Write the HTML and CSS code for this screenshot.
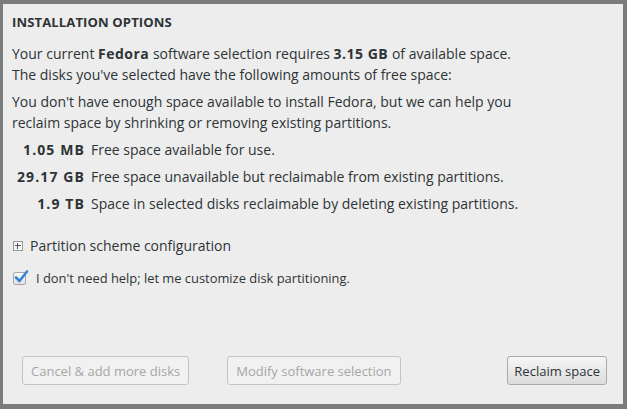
FILE: index.html
```html
<!DOCTYPE html>
<html>
<head>
<meta charset="utf-8">
<link rel="stylesheet" href="styles.css">
</head>
<body>
<div class="dialog">
  <h1 class="title">INSTALLATION OPTIONS</h1>
  <p class="para">Your current <b>Fedora</b> software selection requires <b>3.15 GB</b> of available space.<br>The disks you've selected have the following amounts of free space:</p>
  <p class="para">You don't have enough space available to install Fedora, but we can help you<br>reclaim space by shrinking or removing existing partitions.</p>
  <div class="amounts">
    <span class="amt">1.05 MB</span><span class="desc">Free space available for use.</span>
    <span class="amt">29.17 GB</span><span class="desc">Free space unavailable but reclaimable from existing partitions.</span>
    <span class="amt">1.9 TB</span><span class="desc">Space in selected disks reclaimable by deleting existing partitions.</span>
  </div>
  <div class="expander"><span class="plus"></span><span>Partition scheme configuration</span></div>
  <div class="check"><span class="box"><svg width="16" height="16" viewBox="0 0 16 16"><path d="M3 8.5 L6.5 12 L14 2.5" fill="none" stroke="#3b82d4" stroke-width="2.6" stroke-linecap="round" stroke-linejoin="round"/></svg></span><span>I don't need help; let me customize disk partitioning.</span></div>
  <div class="spacer"></div>
  <div class="buttons">
    <button class="btn disabled">Cancel &amp; add more disks</button>
    <button class="btn disabled second">Modify software selection</button>
    <button class="btn primary">Reclaim space</button>
  </div>
</div>
</body>
</html>
```
FILE: styles.css
```css
html, body {
  margin: 0;
  padding: 0;
  background: #7b7b7b;
  width: 627px;
  height: 409px;
  overflow: hidden;
}
body {
  padding: 4px 4px 5px 3px;
  box-sizing: border-box;
  font-family: "Open Sans", "DejaVu Sans", sans-serif;
  color: #2e3436;
}
.dialog {
  background: #ededed;
  height: 400px;
  box-sizing: border-box;
  padding: 9px 0 0 9px;
  display: flex;
  flex-direction: column;
  font-size: 14px;
}
.title {
  margin: 0;
  font-size: 13.1px;
  font-weight: bold;
  line-height: 18px;
  letter-spacing: 0.1px;
}
.para {
  margin: 0;
  line-height: 21px;
}
.title + .para { margin-top: 12px; }
.para + .para { margin-top: 6px; }
b { font-weight: bold; letter-spacing: 0.5px; }
.amounts {
  margin-top: 6px;
  display: grid;
  grid-template-columns: 73px auto;
  column-gap: 6px;
  row-gap: 6px;
  line-height: 21px;
}
.amt {
  text-align: right;
  font-weight: bold;
  letter-spacing: 1.1px;
}
.expander {
  margin-top: 21px;
  display: flex;
  align-items: center;
  gap: 7px;
  margin-left: 1px;
  line-height: 21px;
}
.plus {
  width: 10px;
  height: 10px;
  border: 1px solid #9a9a9a;
  box-sizing: border-box;
  position: relative;
  background: #f6f6f6;
}
.plus::before, .plus::after {
  content: "";
  position: absolute;
  background: #555;
}
.plus::before { left: 1px; top: 3px; width: 6px; height: 1px; }
.plus::after { left: 3px; top: 1px; width: 1px; height: 6px; }
.check {
  margin-top: 12px;
  display: flex;
  align-items: center;
  gap: 10px;
  margin-left: 1px;
  font-size: 12.9px;
  line-height: 21px;
}
.box {
  width: 13px;
  height: 13px;
  border: 1px solid #a9a9a9;
  border-radius: 2px;
  box-sizing: border-box;
  background: linear-gradient(#fafafa, #e2e2e2);
  position: relative;
}
.box svg {
  position: absolute;
  left: -1px;
  top: -4px;
}
.spacer { flex: 1; }
.buttons {
  display: flex;
  align-items: center;
  padding: 0 16px 19px 10px;
}
.btn {
  font-family: inherit;
  font-size: 13px;
  height: 29px;
  padding: 0 8px;
  border-radius: 3px;
  box-sizing: border-box;
}
.disabled {
  color: #a6a6a6;
  background: #f1f1f1;
  border: 1px solid #c4c4c4;
}
.second { margin-left: 38px; }
.primary {
  margin-left: auto;
  padding: 0 6px;
  color: #2e3436;
  border: 1px solid #a9a9a9;
  background: linear-gradient(#f6f6f6, #dcdcdc);
}
```
